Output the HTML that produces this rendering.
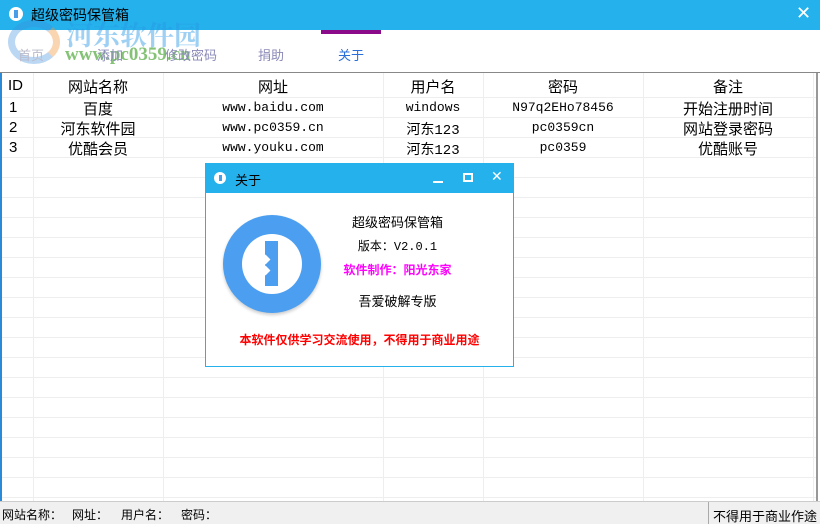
<!DOCTYPE html><html><head><meta charset="utf-8"><style>
*{margin:0;padding:0;box-sizing:border-box}
body{width:820px;height:524px;position:relative;background:#fff;font-family:"Liberation Sans","Noto Sans CJK SC",sans-serif;overflow:hidden}
.a{position:absolute}
.c{position:absolute;text-align:center;font-size:15px;color:#000;white-space:nowrap}
.m{font-family:"Liberation Mono","Noto Sans CJK SC",monospace;font-size:13px}
</style></head><body>
<div class="a" style="left:0;top:0;width:820px;height:30px;background:#25b1ec"></div>
<div class="a" style="left:9px;top:7px;width:14px;height:14px;border-radius:50%;background:#fff"></div>
<div class="a" style="left:14px;top:10px;width:4px;height:8px;background:#4a9ee8"></div>
<div class="a" style="left:31px;top:5px;font-size:14px;color:#000">超级密码保管箱</div>
<div class="a" style="left:796px;top:3px;font-size:18px;color:#fff">✕</div>
<div class="a" style="left:66px;top:14px;font-size:27px;font-weight:bold;color:rgba(40,150,230,.45);font-family:'Noto Serif CJK SC',serif">河东软件园</div>
<div class="a" style="left:8px;top:20px;width:52px;height:44px;border-radius:50%;border:7px solid rgba(60,140,220,.35);border-right-color:rgba(240,150,60,.4)"></div>
<div class="a" style="left:65px;top:44px;font-size:19px;font-weight:bold;color:rgba(80,170,60,.7);font-family:'Liberation Serif',serif">www.pc0359.cn</div>
<div class="a" style="left:321px;top:30px;width:60px;height:4px;background:#8a0a8a"></div>
<div class="a" style="left:18px;top:45px;font-size:13px;color:#bbc">首页</div>
<div class="a" style="left:97px;top:45px;font-size:13px;color:#8a8ab8">添加</div>
<div class="a" style="left:165px;top:45px;font-size:13px;color:#8a8ab8">修改密码</div>
<div class="a" style="left:258px;top:45px;font-size:13px;color:#8a8ab8">捐助</div>
<div class="a" style="left:338px;top:45px;font-size:13px;color:#2a6ed8">关于</div>
<div class="a" style="left:0;top:72px;width:820px;height:1px;background:#888"></div>
<div class="a" style="left:0;top:73px;width:2px;height:428px;background:#2a8ad8"></div>
<div class="a" style="left:816px;top:73px;width:2px;height:428px;background:#999"></div>
<div class="a" style="left:2px;top:97px;width:814px;height:404px;background:repeating-linear-gradient(to bottom,#eeeeee 0,#eeeeee 1px,transparent 1px,transparent 20px)"></div>
<div class="a" style="left:33px;top:73px;width:1px;height:428px;background:#eee"></div>
<div class="a" style="left:163px;top:73px;width:1px;height:428px;background:#eee"></div>
<div class="a" style="left:383px;top:73px;width:1px;height:428px;background:#eee"></div>
<div class="a" style="left:483px;top:73px;width:1px;height:428px;background:#eee"></div>
<div class="a" style="left:643px;top:73px;width:1px;height:428px;background:#eee"></div>
<div class="a" style="left:813px;top:73px;width:1px;height:428px;background:#eee"></div>
<div class="c" style="left:8px;top:77px">ID</div>
<div class="c" style="left:33px;width:130px;top:76px">网站名称</div>
<div class="c" style="left:163px;width:220px;top:76px">网址</div>
<div class="c" style="left:383px;width:100px;top:76px">用户名</div>
<div class="c" style="left:483px;width:160px;top:76px">密码</div>
<div class="c" style="left:643px;width:170px;top:76px">备注</div>
<div class="c" style="left:9px;top:99px">1</div><div class="c" style="left:9px;top:119px">2</div><div class="c" style="left:9px;top:139px">3</div>
<div class="c" style="left:33px;width:130px;top:98px">百度</div>
<div class="c" style="left:33px;width:130px;top:118px">河东软件园</div>
<div class="c" style="left:33px;width:130px;top:138px">优酷会员</div>
<div class="c m" style="left:163px;width:220px;top:100px">www.baidu.com</div>
<div class="c m" style="left:163px;width:220px;top:120px">www.pc0359.cn</div>
<div class="c m" style="left:163px;width:220px;top:140px">www.youku.com</div>
<div class="c m" style="left:383px;width:100px;top:100px">windows</div>
<div class="c m" style="left:383px;width:100px;top:119px;font-size:14px">河东123</div>
<div class="c m" style="left:383px;width:100px;top:139px;font-size:14px">河东123</div>
<div class="c m" style="left:483px;width:160px;top:100px">N97q2EHo78456</div>
<div class="c m" style="left:483px;width:160px;top:120px">pc0359cn</div>
<div class="c m" style="left:483px;width:160px;top:140px">pc0359</div>
<div class="c" style="left:643px;width:170px;top:98px">开始注册时间</div>
<div class="c" style="left:643px;width:170px;top:118px">网站登录密码</div>
<div class="c" style="left:643px;width:170px;top:138px">优酷账号</div>
<div class="a" style="left:0;top:501px;width:820px;height:23px;background:#f0f0f0;border-top:1px solid #ccc"></div>
<div class="a" style="left:2px;top:506px;font-size:12px">网站名称：</div>
<div class="a" style="left:72px;top:506px;font-size:12px">网址：</div>
<div class="a" style="left:121px;top:506px;font-size:12px">用户名：</div>
<div class="a" style="left:181px;top:506px;font-size:12px">密码：</div>
<div class="a" style="left:708px;top:502px;width:1px;height:22px;background:#aaa"></div>
<div class="a" style="left:713px;top:506px;font-size:13px">不得用于商业作途</div>
<div class="a" style="left:205px;top:163px;width:309px;height:204px;background:#fff;border:1px solid #25b1ec"></div>
<div class="a" style="left:205px;top:163px;width:309px;height:30px;background:#25b1ec"></div>
<div class="a" style="left:214px;top:172px;width:12px;height:12px;border-radius:50%;background:#fff"></div>
<div class="a" style="left:219px;top:175px;width:3px;height:6px;background:#4a9ee8"></div>
<div class="a" style="left:235px;top:170px;font-size:13px">关于</div>
<div class="a" style="left:433px;top:181px;width:10px;height:2px;background:#fff"></div>
<div class="a" style="left:463px;top:173px;width:10px;height:9px;border:2px solid #fff"></div>
<div class="a" style="left:491px;top:168px;font-size:14px;color:#fff">✕</div>
<div class="a" style="left:223px;top:215px;width:98px;height:98px;border-radius:50%;background:#4c9ff0;box-shadow:0 2px 3px #ccc"></div>
<div class="a" style="left:242px;top:234px;width:60px;height:60px;border-radius:50%;background:#fff"></div>
<div class="a" style="left:265px;top:241px;width:13px;height:45px;background:#4c9ff0"></div>
<div class="a" style="left:262px;top:256px;width:7px;height:7px;background:#fff;transform:rotate(45deg)"></div>
<div class="a" style="left:262px;top:267px;width:7px;height:7px;background:#fff;transform:rotate(45deg)"></div>
<div class="c" style="left:330px;width:135px;top:212px;font-size:13px">超级密码保管箱</div>
<div class="c" style="left:330px;width:135px;top:237px;font-size:12px">版本：<span class="m" style="font-size:12px">V2.0.1</span></div>
<div class="c" style="left:330px;width:135px;top:261px;font-size:12px;font-weight:bold;color:#f0f">软件制作：阳光东家</div>
<div class="c" style="left:330px;width:135px;top:291px;font-size:13px">吾爱破解专版</div>
<div class="c" style="left:205px;width:309px;top:331px;font-size:12px;font-weight:bold;color:#f00">本软件仅供学习交流使用，不得用于商业用途</div>
</body></html>
